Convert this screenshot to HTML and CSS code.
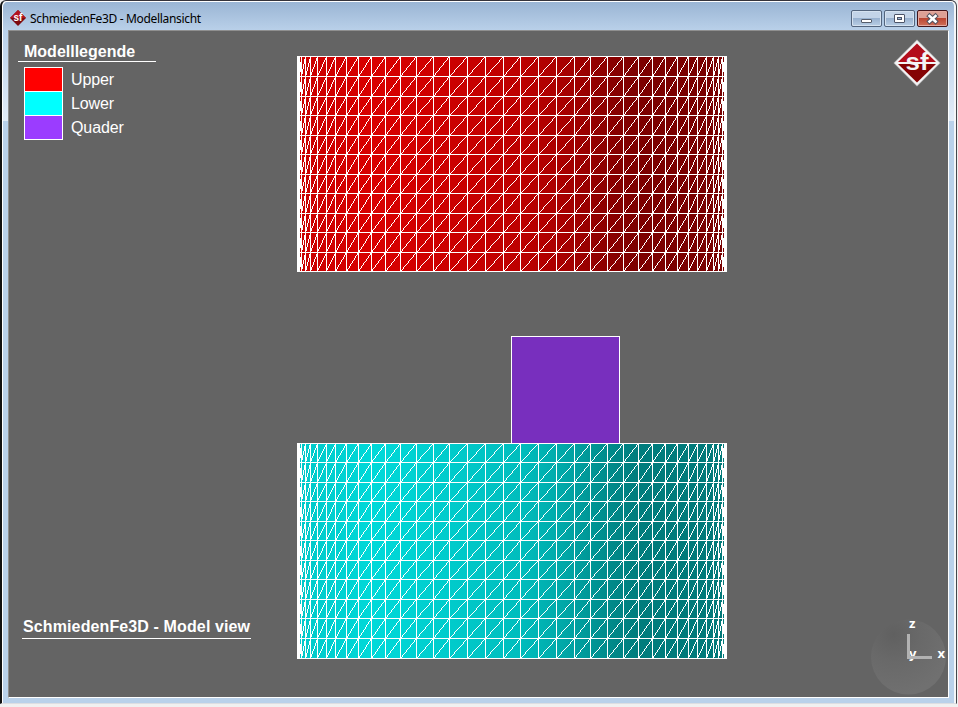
FILE: index.html
```html
<!DOCTYPE html>
<html lang="de">
<head>
<meta charset="utf-8">
<title>SchmiedenFe3D - Modellansicht</title>
<link rel="stylesheet" href="styles.css">
</head>
<body>
<div class="window">
  <header class="titlebar">
    <svg class="app-icon" viewBox="0 0 48 48">
      <path d="M24 0 48 24 24 48 0 24Z" fill="#7d0a10"/>
      <path d="M24 0 48 24H0Z" fill="#b4121d"/>
      <text class="icon-text" x="24" y="33" text-anchor="middle">sf</text>
    </svg>
    <h1 class="title">SchmiedenFe3D - Modellansicht</h1>
    <div class="controls">
      <button class="control" aria-label="Minimieren"><svg viewBox="0 0 29 15"><rect x="9.500" y="8.500" width="10" height="3" rx=".5" fill="#fff" stroke="#555d6b"/></svg></button>
      <button class="control" aria-label="Maximieren"><svg viewBox="0 0 29 15"><rect x="9.500" y="3.500" width="10" height="8" rx=".5" fill="#fff" stroke="#4c5468"/><rect x="12.500" y="6.500" width="4" height="2" fill="#9db9da" stroke="#4c5468"/></svg></button>
      <button class="control close" aria-label="Schließen"><svg viewBox="0 0 29 15"><path d="m11.500 5 6 5.500M17.500 5 11.500 10.500" stroke="#53525f" stroke-width="4.600" stroke-linecap="square"/><path d="m11.500 5 6 5.500M17.500 5 11.500 10.500" stroke="#fff" stroke-width="2.600" stroke-linecap="square"/></svg></button>
    </div>
  </header>
  <main class="viewport">
    <svg class="scene" id="scene" viewBox="0 0 939 666">
      <defs>
        <linearGradient id="red">
          <stop offset="0" stop-color="#c80000"/><stop offset=".18" stop-color="#d90000"/><stop offset=".36" stop-color="#cb0000"/><stop offset=".52" stop-color="#bd0000"/><stop offset=".62" stop-color="#a80000"/><stop offset=".72" stop-color="#8c0000"/><stop offset=".79" stop-color="#7d0000"/><stop offset="1" stop-color="#780000"/>
        </linearGradient>
        <linearGradient id="cyan">
          <stop offset="0" stop-color="#00c8c8"/><stop offset=".18" stop-color="#00d9d9"/><stop offset=".36" stop-color="#00cbcb"/><stop offset=".52" stop-color="#00bdbd"/><stop offset=".62" stop-color="#00a8a8"/><stop offset=".72" stop-color="#008c8c"/><stop offset=".79" stop-color="#007d7d"/><stop offset="1" stop-color="#007878"/>
        </linearGradient>
      </defs>
      <rect x="502.500" y="305.500" width="108" height="108" fill="#782fbe" stroke="#fff"/>
    </svg>
    <section class="legend">
      <h2 class="legend-title">Modelllegende</h2>
      <ul class="legend-list">
        <li><span class="swatch upper"></span>Upper</li>
        <li><span class="swatch lower"></span>Lower</li>
        <li><span class="swatch quader"></span>Quader</li>
      </ul>
    </section>
    <svg class="logo" viewBox="0 0 48 48">
      <path d="M24 .5 47.500 24 24 47.500 .5 24Z" fill="#b9b9bb"/>
      <path d="M24 1.500 46.500 24 24 46.500 1.500 24Z" fill="#f4f4f5"/>
      <path d="M24 4.500 43 23H5Z" fill="#b30d1b"/>
      <path d="M5 25H43L24 43.500Z" fill="#850305"/>
      <text class="logo-text" x="24" y="31" text-anchor="middle" textLength="23" lengthAdjust="spacingAndGlyphs">sf</text>
    </svg>
    <p class="view-name">SchmiedenFe3D - Model view</p>
    <svg class="axes" viewBox="0 0 80 80">
      <defs><radialGradient id="ball" cx=".3" cy=".2" r=".8"><stop offset="0" stop-color="#606060"/><stop offset=".45" stop-color="#696969"/><stop offset="1" stop-color="#707070"/></radialGradient></defs>
      <circle cx="38.500" cy="41" r="37.500" fill="url(#ball)"/>
      <text class="axis" x="39" y="12">z</text>
      <text class="axis" x="39" y="42">y</text>
      <text class="axis" x="67.500" y="42">x</text>
      <path d="M38.500 18V41.500H62" fill="none" stroke="#b2b2b2" stroke-width="3"/>
    </svg>
  </main>
</div>
<script src="mesh.js"></script>
</body>
</html>
```
FILE: styles.css
```css
* { box-sizing: border-box; }
body {
  margin: 0;
  height: 707px;
  overflow: hidden;
  background: #f0f0f0;
  font-family: "Liberation Sans", Arial, sans-serif;
}
.window {
  width: 957px;
  height: 704px;
  padding: 1px 7px 5px 6px;
  display: flex;
  flex-direction: column;
  border: solid;
  border-width: 1px 1px 1px 2px;
  border-color: #35333a #45484c #dcdee2 #111;
  border-radius: 6px 6px 0 0;
  box-shadow: inset 1px 1px #fff, inset -2px 0 #f4f6f8;
  background:
    linear-gradient(#99b4d3, #b9d0e9) 0 0 / 100% 29px no-repeat,
    linear-gradient(#b9d1ea, #e2ecf7) 0 29px / 100% 91px no-repeat,
    #b9d1ea;
}
.titlebar {
  flex: 0 0 28px;
  display: flex;
  align-items: center;
  padding: 4px 1px 0 2px;
}
.app-icon { width: 16px; height: 16px; margin-top: -1px; }
.icon-text { font: bold 30px "Liberation Sans", sans-serif; fill: #fff; }
.title {
  margin: 2px 0 0 4px;
  font: 12px/16px "Noto Sans", sans-serif;
  letter-spacing: -.32px;
  color: #000;
  white-space: nowrap;
}
.controls { margin-left: auto; display: flex; gap: 2px; }
.control {
  width: 31px;
  height: 17px;
  padding: 0;
  border: 1px solid #53657e;
  border-radius: 2px;
  background: linear-gradient(#c3d4e8 0 48%, #99b2d0 50%, #b9cee5);
  box-shadow: inset 0 0 0 1px #d5e2f0;
}
.control svg { display: block; width: 29px; height: 15px; }
.control.close {
  border-color: #43151a;
  background: linear-gradient(#dda095 0 45%, #bb4632 50%, #cf7059);
  box-shadow: inset 0 0 0 1px #e4aaa0;
}
.viewport {
  position: relative;
  flex: 1;
  border: 1px solid;
  border-color: #8f8f8f #fff #fff #8f8f8f;
  background: #646464;
  overflow: hidden;
}
.scene { display: block; width: 939px; height: 666px; }
.legend { position: absolute; left: 9px; top: 10px; color: #fff; }
.legend-title {
  width: 138px;
  height: 21px;
  margin: 0 0 5px;
  padding-left: 6px;
  border-bottom: 1px solid #fff;
  font-size: 16px;
  line-height: 22px;
}
.legend-list { margin: 0; padding: 0 0 0 6px; list-style: none; }
.legend-list li {
  display: flex;
  gap: 8px;
  height: 24px;
  font-size: 16px;
  line-height: 26px;
  letter-spacing: -.1px;
}
.swatch {
  width: 39px;
  height: 25px;
  border: 1px solid #fff;
}
.upper { background: #f00; }
.lower { background: #0ff; }
.quader { background: #9b3cff; }
.logo { position: absolute; left: 884px; top: 8px; width: 48px; height: 48px; }
.logo-text { font: bold 24px "Liberation Sans", sans-serif; fill: #f4f4f5; }
.view-name {
  position: absolute;
  left: 13px;
  top: 585px;
  width: 229px;
  height: 23px;
  margin: 0;
  padding-left: 1px;
  border-bottom: 1px solid #fff;
  color: #fff;
  font-weight: bold;
  font-size: 16px;
  line-height: 21px;
  letter-spacing: .12px;
  white-space: nowrap;
}
.axes { position: absolute; left: 861px; top: 585px; width: 80px; height: 80px; }
.axis { font: bold 13px "Noto Sans", sans-serif; fill: #fff; }
```
FILE: mesh.js
```js
const SVG_NS = "http://www.w3.org/2000/svg";
const scene = document.getElementById("scene");
const columns = [288, 290, 292, 296, 301, 308, 317, 326, 337, 349, 362, 376, 391, 407,
  424, 440, 458, 476, 494, 511, 529, 547, 565, 581, 598, 614, 629, 643, 656, 668,
  679, 688, 697, 704, 709, 713, 715, 717];

function add(tag, attributes) {
  const element = document.createElementNS(SVG_NS, tag);
  for (const [key, value] of Object.entries(attributes)) element.setAttribute(key, value);
  scene.appendChild(element);
}

// One-pixel aliased edge from the lower left to the upper right of a cell.
function diagonal(x0, y0, x1, y1) {
  let path = "";
  const height = y0 - y1;
  for (let i = 0; i <= height; i++) {
    const x = Math.round(x0 + (x1 - x0) * i / height);
    path += `M${x} ${y0 - i}h1v1h-1z`;
  }
  return path;
}

function drawCylinder(rows, gradient) {
  const left = columns[0];
  const right = columns[columns.length - 1];
  const top = rows[0];
  const bottom = rows[rows.length - 1];
  const width = right - left + 1;
  const height = bottom - top + 1;
  add("rect", { x: left, y: top, width, height, fill: `url(#${gradient})` });
  let path = "";
  for (const x of columns) path += `M${x} ${top}h1v${height}h-1z`;
  for (const y of rows) path += `M${left} ${y}v1h${width}v-1z`;
  add("path", { d: path, fill: "#fff", "fill-rule": "nonzero", "shape-rendering": "crispEdges" });
  let edges = "";
  for (let r = 1; r < rows.length; r++) {
    for (let c = 1; c < columns.length; c++) {
      edges += diagonal(columns[c - 1], rows[r], columns[c], rows[r - 1]);
    }
  }
  // The outermost strips are seen almost edge-on and close up.
  edges += `M${left} ${top}h2v${height}h-2zM${right - 1} ${top}h2v${height}h-2z`;
  add("path", { d: edges, fill: "#fff", "shape-rendering": "crispEdges" });
}

drawCylinder([25, 45, 65, 84, 104, 123, 143, 162, 182, 201, 221, 240], "red");
drawCylinder([412, 431, 451, 470, 490, 509, 529, 548, 568, 587, 607, 627], "cyan");
```
